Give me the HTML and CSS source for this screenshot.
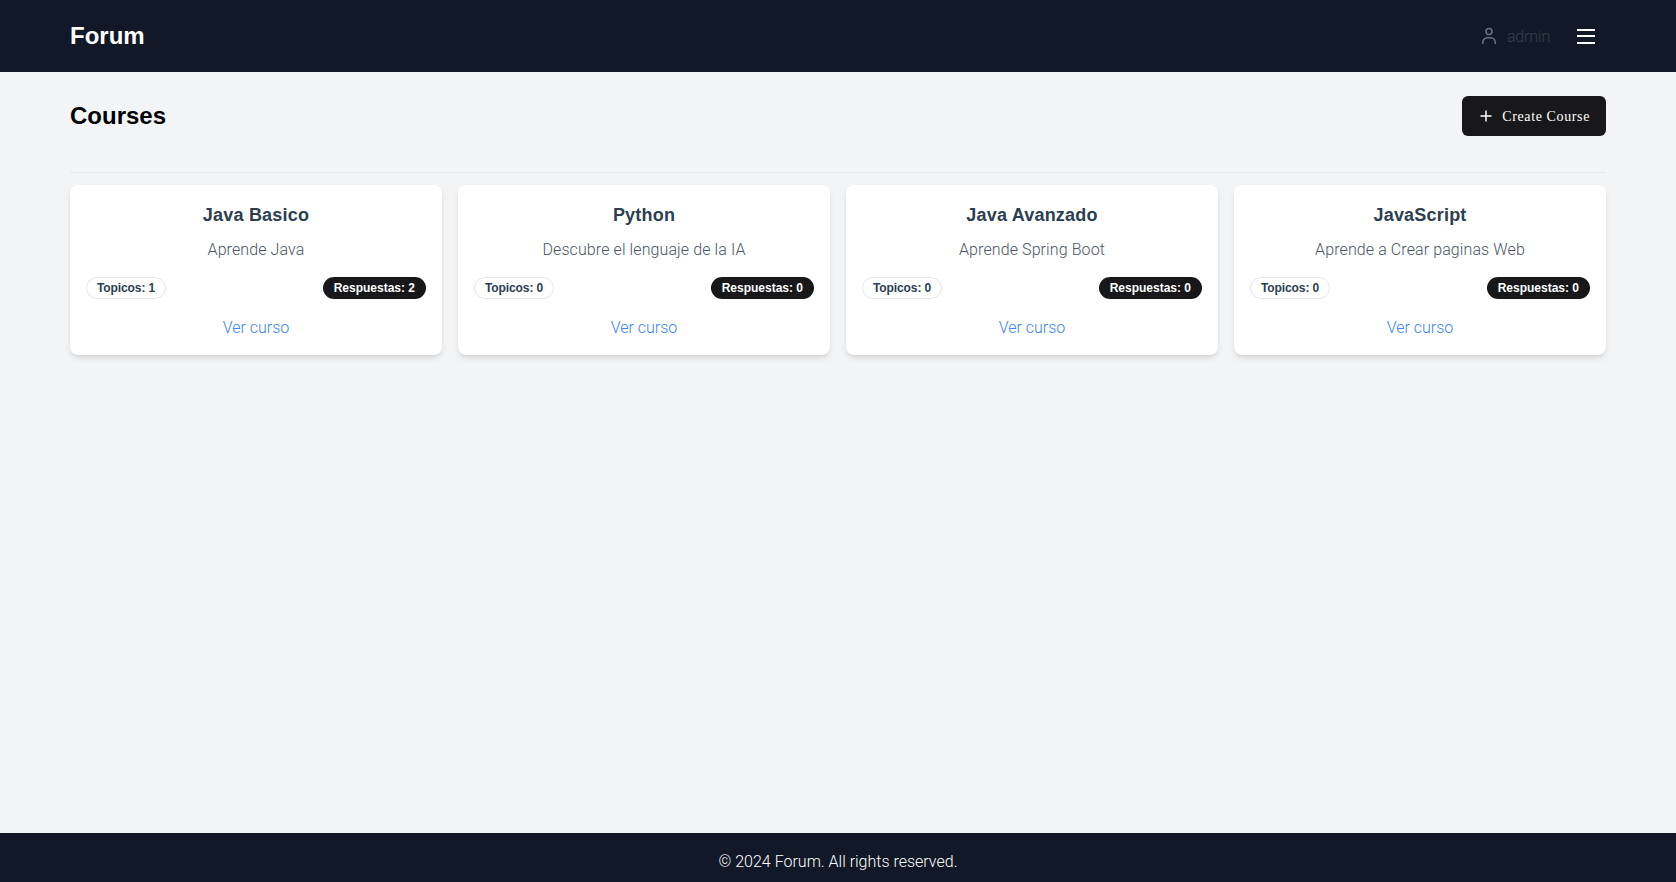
FILE: index.html
```html
<!DOCTYPE html>
<html lang="en">
<head>
    <meta charset="UTF-8">
    <meta name="viewport" content="width=device-width, initial-scale=1.0">
    <title>Forum</title>
    <link rel="stylesheet" href="styles.css">
</head>
<body>

    <!-- Header -->
    <header class="navbar">
        <div class="navbar-inner">
            <a href="#" class="brand">Forum</a>
            <div class="navbar-right">
                <div class="user">
                    <svg fill="none" height="24" viewBox="0 0 24 24" width="24" xmlns="http://www.w3.org/2000/svg">
                        <circle cx="12" cy="7.4" r="3" stroke="currentColor" stroke-width="1.5"/>
                        <path d="M5.75 20v-1.5a4.75 4.75 0 0 1 4.75-4.75h3a4.75 4.75 0 0 1 4.75 4.75V20" stroke="currentColor" stroke-width="1.5"/>
                    </svg>
                    <span>admin</span>
                </div>
                <button class="menu-btn" aria-label="Menu">
                    <span></span>
                    <span></span>
                    <span></span>
                </button>
            </div>
        </div>
    </header>

    <!-- Courses -->
    <main class="content">
        <div class="page-head">
            <h1>Courses</h1>
            <button class="create-btn">
                <svg fill="none" height="16" viewBox="0 0 16 16" width="16" xmlns="http://www.w3.org/2000/svg">
                    <path d="M8 2.5v11M2.5 8h11" stroke="currentColor" stroke-width="1.5"/>
                </svg>
                <span class="create-label">Create Course</span>
            </button>
        </div>
        <hr class="divider">

        <div class="course-grid">
            <div class="course-card">
                <h3>Java Basico</h3>
                <p>Aprende Java</p>
                <div class="badges">
                    <span class="badge badge-outline">Topicos: 1</span>
                    <span class="badge badge-dark">Respuestas: 2</span>
                </div>
                <a href="#" class="course-link">Ver curso</a>
            </div>
            <div class="course-card">
                <h3>Python</h3>
                <p>Descubre el lenguaje de la IA</p>
                <div class="badges">
                    <span class="badge badge-outline">Topicos: 0</span>
                    <span class="badge badge-dark">Respuestas: 0</span>
                </div>
                <a href="#" class="course-link">Ver curso</a>
            </div>
            <div class="course-card">
                <h3>Java Avanzado</h3>
                <p>Aprende Spring Boot</p>
                <div class="badges">
                    <span class="badge badge-outline">Topicos: 0</span>
                    <span class="badge badge-dark">Respuestas: 0</span>
                </div>
                <a href="#" class="course-link">Ver curso</a>
            </div>
            <div class="course-card">
                <h3>JavaScript</h3>
                <p>Aprende a Crear paginas Web</p>
                <div class="badges">
                    <span class="badge badge-outline">Topicos: 0</span>
                    <span class="badge badge-dark">Respuestas: 0</span>
                </div>
                <a href="#" class="course-link">Ver curso</a>
            </div>
        </div>
    </main>

    <!-- Footer -->
    <footer class="footer">© 2024 Forum. All rights reserved.</footer>

</body>
</html>
```

FILE: styles.css
```css
* {
    margin: 0;
    padding: 0;
    box-sizing: border-box;
}

body {
    font-family: "Liberation Sans", Arial, sans-serif;
    background-color: #f3f4f6;
    display: flex;
    flex-direction: column;
    min-height: 100vh;
}

.navbar {
    background-color: #111827;
    height: 72px;
}

.navbar-inner {
    width: 1536px;
    height: 100%;
    margin: 0 auto;
    display: flex;
    justify-content: space-between;
    align-items: center;
}

.brand {
    color: #fff;
    font-size: 24px;
    font-weight: 700;
    text-decoration: none;
}

.navbar-right {
    display: flex;
    align-items: center;
    gap: 16px;
}

.user {
    display: flex;
    align-items: center;
    gap: 6px;
    color: #6b7280;
    font-family: Roboto, sans-serif;
    font-weight: 300;
    font-size: 16px;
}

.user span {
    color: #374151;
    letter-spacing: -0.2px;
}

.menu-btn {
    width: 40px;
    height: 40px;
    background: none;
    border: none;
    display: flex;
    flex-direction: column;
    justify-content: center;
    align-items: center;
    gap: 4.5px;
}

.menu-btn span {
    display: block;
    width: 18px;
    height: 2px;
    background-color: #fff;
}

.content {
    flex: 1;
    width: 1536px;
    margin: 0 auto;
}

.page-head {
    display: flex;
    justify-content: space-between;
    align-items: center;
    padding-top: 24px;
}

.page-head h1 {
    font-size: 24px;
    font-weight: 700;
    color: #000;
}

.create-btn {
    height: 40px;
    padding: 0 16px;
    background-color: #18181b;
    color: #fff;
    border: none;
    border-radius: 6px;
    font-family: "Liberation Serif", serif;
    font-size: 14px;
    letter-spacing: 0.62px;
    display: flex;
    align-items: center;
    gap: 8px;
}

.create-label {
    padding-top: 2px;
}

.divider {
    border: none;
    border-top: 1px solid #e5e7eb;
    margin-top: 36px;
    margin-bottom: 12px;
}

.course-grid {
    display: grid;
    grid-template-columns: repeat(4, 1fr);
    gap: 16px;
}

.course-card {
    background-color: #fff;
    border-radius: 8px;
    padding: 16px;
    text-align: center;
    box-shadow: 0 4px 6px -1px rgba(0, 0, 0, 0.1), 0 2px 4px -2px rgba(0, 0, 0, 0.1);
}

.course-card h3 {
    font-size: 18px;
    line-height: 28px;
    font-weight: 700;
    letter-spacing: 0.2px;
    color: #2c3e50;
    margin-bottom: 8px;
}

.course-card p {
    font-family: Roboto, sans-serif;
    font-size: 16px;
    line-height: 24px;
    font-weight: 300;
    letter-spacing: 0.1px;
    color: #4b5563;
    padding-top: 1px;
    margin-bottom: 15px;
}

.badges {
    display: flex;
    justify-content: space-between;
    margin-bottom: 17px;
}

.badge {
    font-size: 12px;
    line-height: 16px;
    font-weight: 700;
    padding: 2px 10px;
    border-radius: 9999px;
    border: 1px solid transparent;
}

.badge-outline {
    color: #2c3e50;
    letter-spacing: -0.1px;
    border-color: #e5e7eb;
}

.badge-dark {
    color: #fff;
    background-color: #18181b;
}

.course-link {
    display: block;
    font-family: Roboto, sans-serif;
    font-size: 16px;
    line-height: 24px;
    font-weight: 300;
    color: #3b82f6;
    text-decoration: none;
    margin-bottom: -1px;
}

.footer {
    background-color: #111827;
    color: #fff;
    text-align: center;
    font-family: Roboto, sans-serif;
    font-size: 16px;
    line-height: 24px;
    font-weight: 300;
    height: 49px;
    padding: 17px 0 0;
}
```
